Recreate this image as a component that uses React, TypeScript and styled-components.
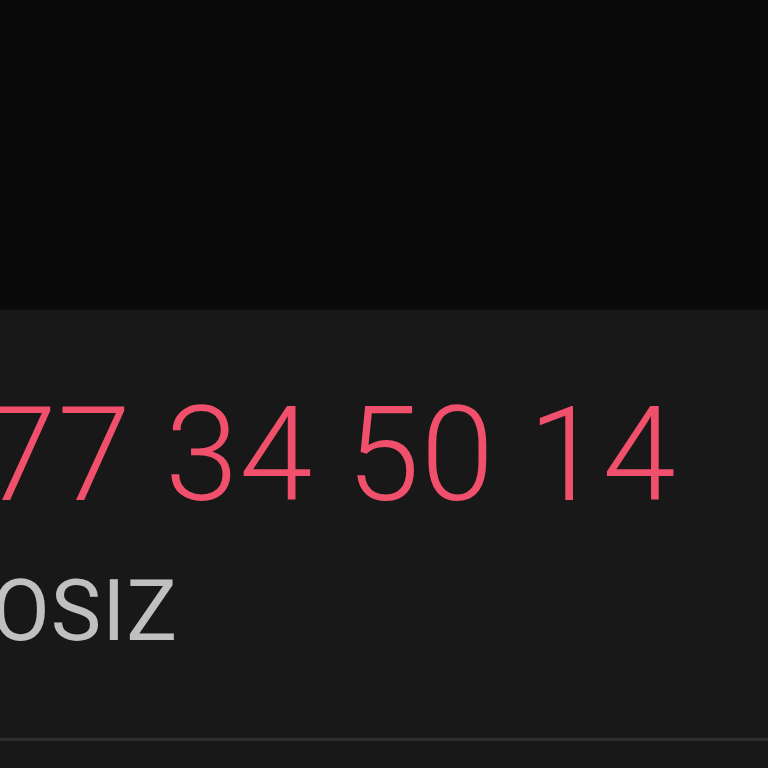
import styled, { createGlobalStyle } from "styled-components";

const GlobalStyle = createGlobalStyle`
  html, body {
    margin: 0;
    padding: 0;
    background: #0a0a0a;
  }
  body {
    font-family: Roboto, "Liberation Sans", sans-serif;
  }
`;

const Screen = styled.div`
  width: 768px;
  height: 768px;
  display: flex;
  flex-direction: column;
  overflow: hidden;
  background: #0a0a0a;
`;

const TopArea = styled.div`
  height: 310px;
  flex-shrink: 0;
  background: #0a0a0a;
`;

const Panel = styled.div`
  flex: 1;
  display: flex;
  flex-direction: column;
  background: #181818;
  overflow: hidden;
`;

const Info = styled.div`
  display: flex;
  flex-direction: column;
  padding-top: 79px;
  padding-bottom: 84px;
  gap: 48px;
`;

const Phone = styled.div`
  font-size: 132px;
  line-height: 1;
  font-weight: 300;
  letter-spacing: 1px;
  color: #f0506b;
  white-space: nowrap;
  text-indent: -348px;
`;

const Note = styled.div`
  font-size: 85px;
  line-height: 1;
  font-weight: 400;
  letter-spacing: 1px;
  color: #c0c0c0;
  white-space: nowrap;
  text-indent: -346px;
`;

const Divider = styled.div`
  height: 3px;
  background: #2c2c2c;
  flex-shrink: 0;
`;

export default function App() {
  return (
    <>
      <GlobalStyle />
      <Screen>
        <TopArea />
        <Panel>
          <Info>
            <Phone>+998 77 34 50 14</Phone>
            <Note>MUAMMOSIZ</Note>
          </Info>
          <Divider />
        </Panel>
      </Screen>
    </>
  );
}
